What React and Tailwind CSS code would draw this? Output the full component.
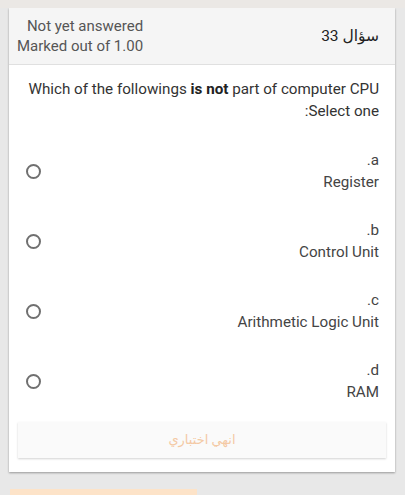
const OPTIONS = [
  { letter: "a.", label: "Register" },
  { letter: "b.", label: "Control Unit" },
  { letter: "c.", label: "Arithmetic Logic Unit" },
  { letter: "d.", label: "RAM" },
];

const App = () => {
  return (
    <div
      dir="rtl"
      className="w-[405px] h-[495px] overflow-hidden bg-[#e8e8e8] pt-[8px] relative"
      style={{ fontFamily: "Roboto, 'DejaVu Sans', sans-serif" }}
    >
      <div className="absolute top-0 left-0 right-0 h-[8px] bg-[#ebe8e5]" />

      {/* Question card */}
      <div className="mx-[10px] w-[386px] bg-white shadow-[0_1px_2px_rgba(0,0,0,0.35)]">
        {/* Header */}
        <div className="flex items-center justify-between bg-[#f5f5f5] border-b border-[#e0e0e0] pr-[16px] pl-[8px] py-[8px]">
          <div className="text-[15.5px] text-[#222] leading-[20px]">سؤال 33</div>
          <div className="text-[15px] text-[#555] leading-[20px] text-right">
            <div>Not yet answered</div>
            <div>Marked out of 1.00</div>
          </div>
        </div>

        {/* Body */}
        <div className="pt-[13px] pr-[16px] pl-[17px] pb-[14px]">
          <div className="text-[15.2px] text-[#333] leading-[22px]">
            Which of the followings <b className="font-bold text-[#222]">is not</b> part of computer CPU
          </div>
          <div className="text-[15.2px] text-[#333] leading-[22px]">Select one:</div>

          <div className="flex flex-col gap-[26px] mt-[27px]">
            {OPTIONS.map((o) => (
              <div key={o.letter} className="flex items-center justify-between">
                <div className="text-[15.2px] text-[#444] leading-[22px]">
                  <div>{o.letter}</div>
                  <div>{o.label}</div>
                </div>
                <span className="w-[15px] h-[15px] rounded-full border-2 border-[#707070]" />
              </div>
            ))}
          </div>

          <button className="mt-[19px] -mr-[7px] w-[368px] h-[36px] bg-[#fafafa] shadow-[0_1px_2px_rgba(0,0,0,0.18)] text-[13px] text-[#f4c9a4] flex items-center justify-center">
            انهي اختباري
          </button>
        </div>
      </div>

      <div className="absolute bottom-0 left-[10px] w-[187px] h-[6px] bg-[#fde3c8]" />
    </div>
  );
};

export default App;
